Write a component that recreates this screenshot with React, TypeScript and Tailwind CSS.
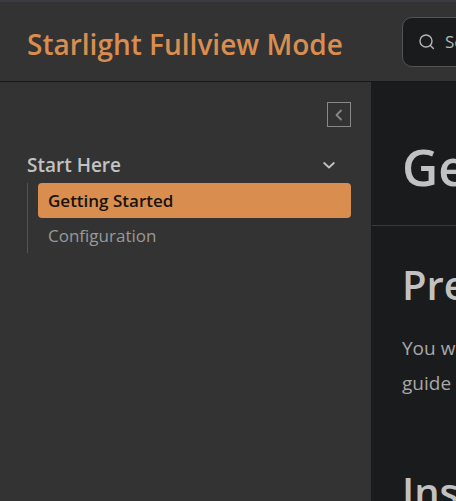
import { ReactNode } from "react";

function SearchIcon() {
  return (
    <svg viewBox="0 0 16 16" className="size-4 shrink-0" fill="none" stroke="currentColor" strokeWidth="1.4" strokeLinecap="round" aria-hidden="true">
      <circle cx="7" cy="7" r="6" />
      <path d="M11.4 11.4 14.4 14.4" />
    </svg>
  );
}

function Chevron({ direction }: { direction: "left" | "down" }) {
  return (
    <svg viewBox="0 0 12 12" className="size-3" fill="none" stroke="currentColor" strokeWidth="1.8" strokeLinecap="round" strokeLinejoin="round" aria-hidden="true">
      <path d={direction === "left" ? "M8 1.5 3.5 6 8 10.5" : "M1.2 4 6 8.5 10.8 4"} />
    </svg>
  );
}

function Header() {
  return (
    <header className="flex h-20 items-center gap-[54px] border-b border-b-[#17181c] bg-[#333333] pl-[27px]">
      <a href="#home" className="w-[321px] shrink-0 pt-1 text-[28px] leading-10 font-semibold whitespace-nowrap text-[#d98e50]">
        Starlight Fullview Mode
      </a>
      <button type="button" className="flex h-[50px] w-[352px] shrink-0 items-center gap-[10px] rounded-[10px] border border-[#545454] bg-[#1a1b1d] px-4 text-[17px] text-[#b5b5b5]">
        <SearchIcon />
        Search
      </button>
    </header>
  );
}

function Sidebar() {
  return (
    <nav aria-label="Main" className="w-[371px] shrink-0 bg-[#333333] pt-5 pr-5 pl-[27px]">
      <div className="flex justify-end">
        <button type="button" aria-label="Collapse sidebar" className="flex h-[25px] w-6 items-center justify-center border border-[#888888] text-[#888888]">
          <Chevron direction="left" />
        </button>
      </div>
      <button type="button" aria-expanded="true" className="mt-6 mb-1 flex h-7 w-full items-center justify-between pr-4 text-[19px] font-semibold text-[#c2c2c2]">
        Start Here
        <Chevron direction="down" />
      </button>
      <ul className="border-l border-[#545454] pl-[10px] text-[17px] leading-[35px]">
        <li>
          <a href="#getting-started" aria-current="page" className="block rounded bg-[#d98e50] px-[10px] font-semibold text-[#17120e]">
            Getting Started
          </a>
        </li>
        <li>
          <a href="#configuration" className="block px-[10px] text-[#999999]">
            Configuration
          </a>
        </li>
      </ul>
    </nav>
  );
}

function SectionHeading({ children }: { children: ReactNode }) {
  return <h2 className="text-[40px] leading-[50px] font-semibold text-[#c2c2c2]">{children}</h2>;
}

function Content() {
  return (
    <main className="min-w-0 flex-1 overflow-hidden whitespace-nowrap">
      <div className="ml-px border-b border-[#3a3a3a] px-[30px] pt-[55px] pb-7">
        <h1 className="text-[50px] leading-[60px] font-semibold text-[#c2c2c2]">Getting Started</h1>
      </div>
      <div className="px-[31px] pt-[34px]">
        <SectionHeading>Prerequisites</SectionHeading>
        <p className="mt-[21px] text-[19px] leading-[35px] text-[#a8a8a8]">
          You will
          <br />
          guide
        </p>
        <div className="mt-[66px]">
          <SectionHeading>Installation</SectionHeading>
        </div>
      </div>
    </main>
  );
}

export default function App() {
  return (
    <div className="flex h-screen flex-col overflow-hidden border-t-2 border-[#3b3a45] bg-[#1a1b1d] font-['Open_Sans','Noto_Sans',sans-serif]">
      <Header />
      <div className="flex min-h-0 flex-1">
        <Sidebar />
        <Content />
      </div>
    </div>
  );
}
